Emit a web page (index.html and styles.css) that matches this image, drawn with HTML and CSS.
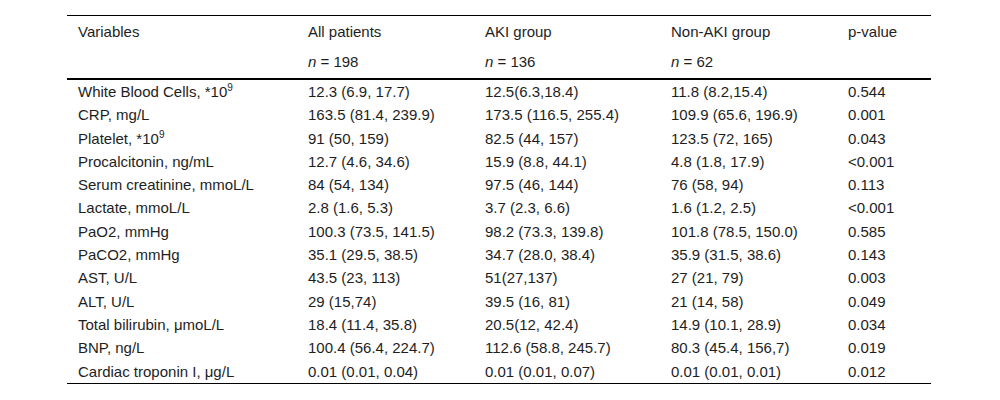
FILE: index.html
```html
<!DOCTYPE html>
<html lang="en">
<head>
<meta charset="utf-8">
<title>Laboratory variables</title>
<link rel="stylesheet" href="styles.css">
</head>
<body>
<table class="data">
  <colgroup>
    <col class="c-var">
    <col class="c-all">
    <col class="c-aki">
    <col class="c-non">
    <col class="c-p">
  </colgroup>
  <thead>
    <tr class="head-1">
      <th>Variables</th>
      <th>All patients</th>
      <th>AKI group</th>
      <th>Non-AKI group</th>
      <th>p-value</th>
    </tr>
    <tr class="head-2">
      <th></th>
      <th><i>n</i> = 198</th>
      <th><i>n</i> = 136</th>
      <th><i>n</i> = 62</th>
      <th></th>
    </tr>
  </thead>
  <tbody>
    <tr><td>White Blood Cells, *10<sup>9</sup></td><td>12.3 (6.9, 17.7)</td><td>12.5(6.3,18.4)</td><td>11.8 (8.2,15.4)</td><td>0.544</td></tr>
    <tr><td>CRP, mg/L</td><td>163.5 (81.4, 239.9)</td><td>173.5 (116.5, 255.4)</td><td>109.9 (65.6, 196.9)</td><td>0.001</td></tr>
    <tr><td>Platelet, *10<sup>9</sup></td><td>91 (50, 159)</td><td>82.5 (44, 157)</td><td>123.5 (72, 165)</td><td>0.043</td></tr>
    <tr><td>Procalcitonin, ng/mL</td><td>12.7 (4.6, 34.6)</td><td>15.9 (8.8, 44.1)</td><td>4.8 (1.8, 17.9)</td><td>&lt;0.001</td></tr>
    <tr><td>Serum creatinine, mmoL/L</td><td>84 (54, 134)</td><td>97.5 (46, 144)</td><td>76 (58, 94)</td><td>0.113</td></tr>
    <tr><td>Lactate, mmoL/L</td><td>2.8 (1.6, 5.3)</td><td>3.7 (2.3, 6.6)</td><td>1.6 (1.2, 2.5)</td><td>&lt;0.001</td></tr>
    <tr><td>PaO2, mmHg</td><td>100.3 (73.5, 141.5)</td><td>98.2 (73.3, 139.8)</td><td>101.8 (78.5, 150.0)</td><td>0.585</td></tr>
    <tr><td>PaCO2, mmHg</td><td>35.1 (29.5, 38.5)</td><td>34.7 (28.0, 38.4)</td><td>35.9 (31.5, 38.6)</td><td>0.143</td></tr>
    <tr><td>AST, U/L</td><td>43.5 (23, 113)</td><td>51(27,137)</td><td>27 (21, 79)</td><td>0.003</td></tr>
    <tr><td>ALT, U/L</td><td>29 (15,74)</td><td>39.5 (16, 81)</td><td>21 (14, 58)</td><td>0.049</td></tr>
    <tr><td>Total bilirubin, μmoL/L</td><td>18.4 (11.4, 35.8)</td><td>20.5(12, 42.4)</td><td>14.9 (10.1, 28.9)</td><td>0.034</td></tr>
    <tr><td>BNP, ng/L</td><td>100.4 (56.4, 224.7)</td><td>112.6 (58.8, 245.7)</td><td>80.3 (45.4, 156,7)</td><td>0.019</td></tr>
    <tr class="last"><td>Cardiac troponin I, μg/L</td><td>0.01 (0.01, 0.04)</td><td>0.01 (0.01, 0.07)</td><td>0.01 (0.01, 0.01)</td><td>0.012</td></tr>
  </tbody>
</table>
</body>
</html>
```

FILE: styles.css
```css
html, body {
  margin: 0;
  padding: 0;
  background: #ffffff;
}

body {
  font-family: "Liberation Sans", Arial, Helvetica, sans-serif;
  font-size: 15px;
  color: #1e1e1e;
}

.data {
  margin: 15px 0 0 67px;
  width: 864px;
  border-collapse: collapse;
  table-layout: fixed;
}

.c-var { width: 230px; }
.c-all { width: 177px; }
.c-aki { width: 186px; }
.c-non { width: 177px; }
.c-p   { width: 94px; }

.data th,
.data td {
  text-align: left;
  font-weight: normal;
  padding: 2px 0 2px 11px;
  line-height: 19.3px;
  white-space: nowrap;
  vertical-align: top;
}

.head-1 th {
  border-top: 1px solid #000000;
  padding-top: 6px;
  padding-bottom: 3px;
}

.head-2 th {
  padding-top: 8px;
  padding-bottom: 6.4px;
  border-bottom: 2px solid #000000;
}

.data sup {
  font-size: 10px;
  line-height: 0;
  vertical-align: 6px;
}

.last td {
  border-bottom: 1px solid #000000;
}
```
